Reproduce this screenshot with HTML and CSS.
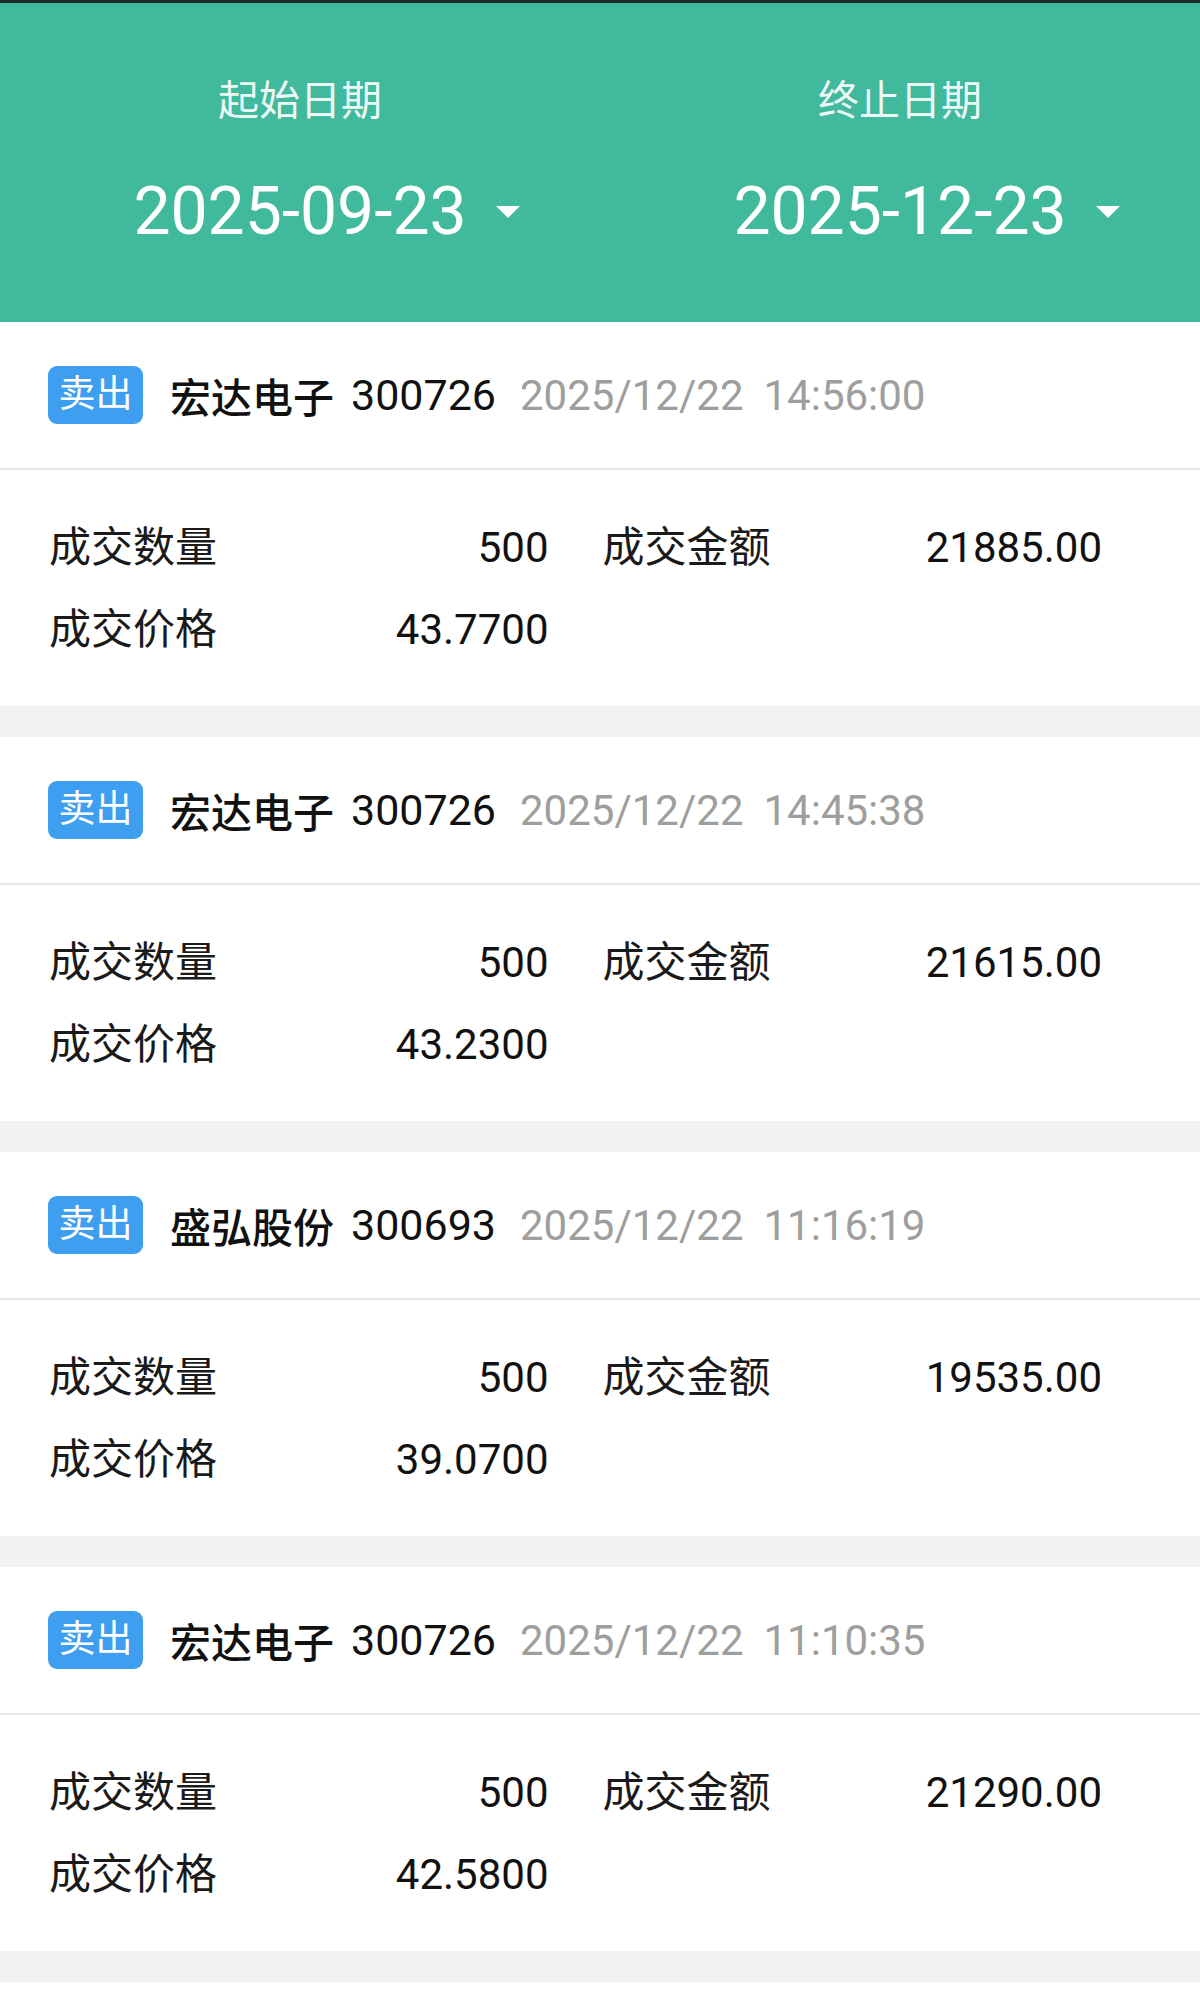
FILE: index.html
```html
<!DOCTYPE html>
<html lang="zh-CN">
<head>
<meta charset="UTF-8">
<meta name="viewport" content="width=device-width, initial-scale=1.0">
<title>成交查询</title>
<link rel="stylesheet" href="styles.css">
</head>
<body>
<div class="header">
    <div class="picker">
        <div class="picker-label">起始日期</div>
        <div class="picker-value">
            <span class="date">2025-09-23</span>
            <span class="caret"></span>
        </div>
    </div>
    <div class="picker">
        <div class="picker-label">终止日期</div>
        <div class="picker-value">
            <span class="date">2025-12-23</span>
            <span class="caret"></span>
        </div>
    </div>
</div>

<div class="list">
    <div class="card">
        <div class="card-head">
            <span class="badge">卖出</span>
            <span class="stock-name">宏达电子</span>
            <span class="stock-code">300726</span>
            <span class="trade-date">2025/12/22</span>
            <span class="trade-time">14:56:00</span>
        </div>
        <div class="card-body">
            <div class="field"><span class="field-label">成交数量</span><span class="field-value">500</span></div>
            <div class="field"><span class="field-label">成交金额</span><span class="field-value">21885.00</span></div>
            <div class="field"><span class="field-label">成交价格</span><span class="field-value">43.7700</span></div>
        </div>
    </div>

    <div class="card">
        <div class="card-head">
            <span class="badge">卖出</span>
            <span class="stock-name">宏达电子</span>
            <span class="stock-code">300726</span>
            <span class="trade-date">2025/12/22</span>
            <span class="trade-time">14:45:38</span>
        </div>
        <div class="card-body">
            <div class="field"><span class="field-label">成交数量</span><span class="field-value">500</span></div>
            <div class="field"><span class="field-label">成交金额</span><span class="field-value">21615.00</span></div>
            <div class="field"><span class="field-label">成交价格</span><span class="field-value">43.2300</span></div>
        </div>
    </div>

    <div class="card">
        <div class="card-head">
            <span class="badge">卖出</span>
            <span class="stock-name">盛弘股份</span>
            <span class="stock-code">300693</span>
            <span class="trade-date">2025/12/22</span>
            <span class="trade-time">11:16:19</span>
        </div>
        <div class="card-body">
            <div class="field"><span class="field-label">成交数量</span><span class="field-value">500</span></div>
            <div class="field"><span class="field-label">成交金额</span><span class="field-value">19535.00</span></div>
            <div class="field"><span class="field-label">成交价格</span><span class="field-value">39.0700</span></div>
        </div>
    </div>

    <div class="card">
        <div class="card-head">
            <span class="badge">卖出</span>
            <span class="stock-name">宏达电子</span>
            <span class="stock-code">300726</span>
            <span class="trade-date">2025/12/22</span>
            <span class="trade-time">11:10:35</span>
        </div>
        <div class="card-body">
            <div class="field"><span class="field-label">成交数量</span><span class="field-value">500</span></div>
            <div class="field"><span class="field-label">成交金额</span><span class="field-value">21290.00</span></div>
            <div class="field"><span class="field-label">成交价格</span><span class="field-value">42.5800</span></div>
        </div>
    </div>

    <div class="list-end"></div>
</div>
</body>
</html>
```

FILE: styles.css
```css
body {
    font-family: Roboto, "Noto Sans CJK SC", sans-serif;
    margin: 0;
    padding: 0;
    background-color: #f2f2f2;
    color: #111;
}

.header {
    display: grid;
    grid-template-columns: 1fr 1fr;
    background-color: #41b99d;
    border-top: 3px solid #1b2a29;
    padding: 73px 0 70px;
    color: #fff;
}

.picker-label {
    text-align: center;
    font-size: 41px;
    line-height: 50px;
    color: rgba(255, 255, 255, 0.93);
}

.picker-value {
    display: grid;
    grid-template-columns: 1fr auto 1fr;
    align-items: center;
    margin-top: 46px;
    height: 80px;
}

.date {
    grid-column: 2;
    font-size: 66px;
    line-height: 80px;
}

.caret {
    justify-self: end;
    margin-right: 80px;
    width: 0;
    height: 0;
    border-left: 12px solid transparent;
    border-right: 12px solid transparent;
    border-top: 12px solid #fff;
}

.list {
    display: flex;
    flex-direction: column;
    gap: 31px;
}

.card {
    background-color: #fff;
}

.card-head {
    display: flex;
    align-items: center;
    height: 146px;
    padding-left: 48px;
    border-bottom: 2px solid #e6e6e6;
    white-space: nowrap;
}

.badge {
    width: 95px;
    height: 58px;
    line-height: 58px;
    text-align: center;
    border-radius: 9px;
    background-color: #3e9ef0;
    color: #fff;
    font-size: 37px;
}

.stock-name {
    margin-left: 27px;
    font-size: 41px;
    font-weight: 500;
}

.stock-code {
    margin-left: 17px;
    font-size: 43px;
}

.trade-date,
.trade-time {
    font-size: 42px;
    color: #9e9e9e;
}

.trade-date {
    margin-left: 24px;
}

.trade-time {
    margin-left: 20px;
}

.card-body {
    display: grid;
    grid-template-columns: 1fr 1fr;
    column-gap: 54px;
    padding: 37px 98px 35px 49px;
}

.field {
    display: flex;
    justify-content: space-between;
    line-height: 82px;
    font-size: 42px;
}

.field-label {
    color: #1a1a1a;
}

.list-end {
    height: 60px;
    background-color: #fff;
}
```
